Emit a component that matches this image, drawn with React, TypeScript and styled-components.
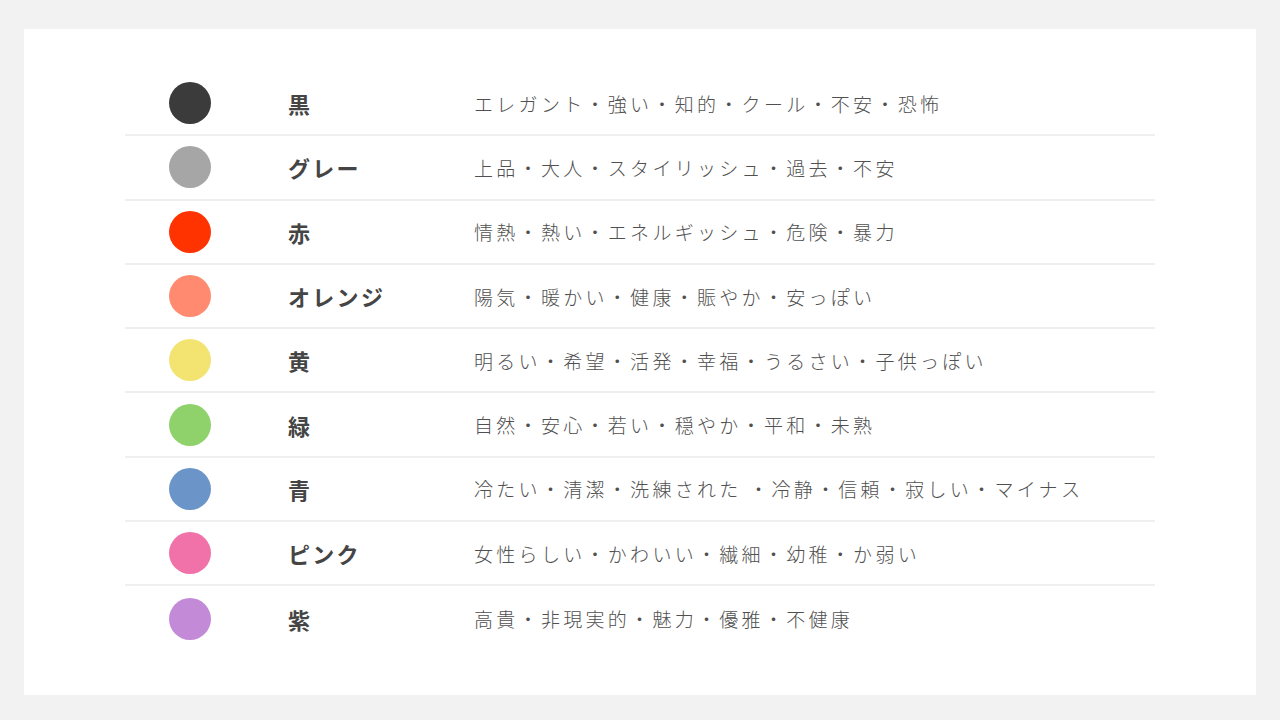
import React from 'react'
import styled, { createGlobalStyle } from 'styled-components'

type ColorRow = { color: string; name: string; words: string }

const rows: ColorRow[] = [
  { color: '#3b3b3b', name: '黒', words: 'エレガント・強い・知的・クール・不安・恐怖' },
  { color: '#a6a6a6', name: 'グレー', words: '上品・大人・スタイリッシュ・過去・不安' },
  { color: '#ff3300', name: '赤', words: '情熱・熱い・エネルギッシュ・危険・暴力' },
  { color: '#ff8a70', name: 'オレンジ', words: '陽気・暖かい・健康・賑やか・安っぽい' },
  { color: '#f3e472', name: '黄', words: '明るい・希望・活発・幸福・うるさい・子供っぽい' },
  { color: '#8fd26c', name: '緑', words: '自然・安心・若い・穏やか・平和・未熟' },
  { color: '#6b95c9', name: '青', words: '冷たい・清潔・洗練された ・冷静・信頼・寂しい・マイナス' },
  { color: '#f172a8', name: 'ピンク', words: '女性らしい・かわいい・繊細・幼稚・か弱い' },
  { color: '#c38bd7', name: '紫', words: '高貴・非現実的・魅力・優雅・不健康' },
]

export default function App() {
  return (
    <>
      <GlobalStyle />
      <Page>
        <Card>
          <Table>
            {rows.map((row) => (
              <Row key={row.name}>
                <SwatchCell>
                  <Swatch $color={row.color} />
                </SwatchCell>
                <Name>{row.name}</Name>
                <Words>{row.words}</Words>
              </Row>
            ))}
          </Table>
        </Card>
      </Page>
    </>
  )
}

const GlobalStyle = createGlobalStyle`
  html, body {
    margin: 0;
    padding: 0;
    background: #f2f2f2;
  }
  body {
    font-family: "Noto Sans CJK JP", "Noto Sans", sans-serif;
  }
`

const Page = styled.div`
  width: 1280px;
  height: 720px;
  box-sizing: border-box;
  padding: 29px 24px 25px;
  background: #f2f2f2;
`

const Card = styled.div`
  height: 100%;
  box-sizing: border-box;
  background: #ffffff;
  padding: 43px 101px 0;
`

const Table = styled.div`
  display: flex;
  flex-direction: column;
`

const Row = styled.div`
  display: grid;
  grid-template-columns: 130px 186px 1fr;
  align-items: center;
  height: 64.3px;
  box-sizing: border-box;
  border-bottom: 2px solid #efefef;

  &:last-child {
    border-bottom: none;
  }
`

const SwatchCell = styled.div`
  display: flex;
  justify-content: center;
`

const Swatch = styled.div<{ $color: string }>`
  width: 42px;
  height: 42px;
  border-radius: 50%;
  background: ${(p) => p.$color};
`

const Name = styled.div`
  padding-left: 33px;
  font-size: 22px;
  font-weight: 700;
  color: #454545;
  letter-spacing: 2.3px;
`

const Words = styled.div`
  padding-left: 33px;
  font-size: 19px;
  font-weight: 300;
  color: #505050;
  letter-spacing: 3.3px;
  white-space: nowrap;
`
